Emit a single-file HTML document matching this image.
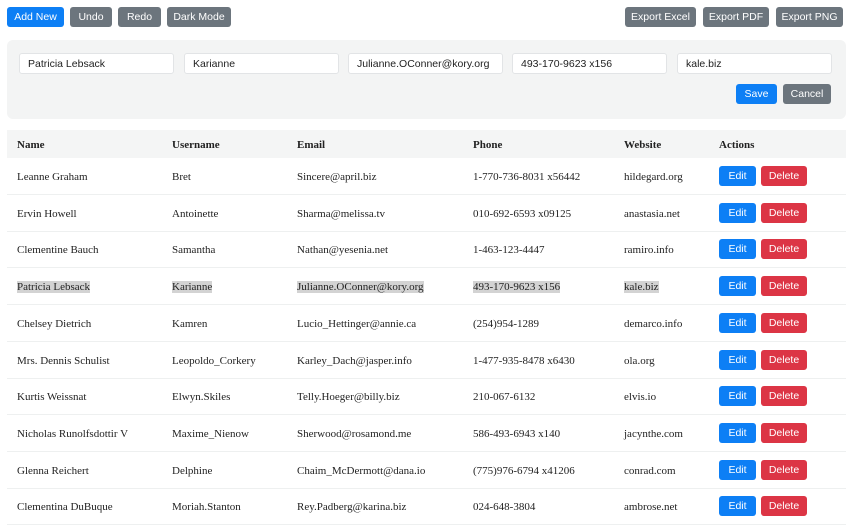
<!DOCTYPE html>
<html><head><meta charset="utf-8"><style>
*{box-sizing:border-box;margin:0;padding:0}
body{width:850px;height:522px;overflow:hidden;background:#fff;position:relative;font-family:"Liberation Serif",serif;font-size:11px;color:#222}
.b{position:absolute;height:20px;border-radius:3px;color:#fff;font-family:"Liberation Sans",sans-serif;font-size:10.5px;display:flex;align-items:center;justify-content:center}
.g{background:#6c757d}.p{background:#0d7ff5}.r{background:#dc3545}
.panel{position:absolute;left:7px;top:40px;width:839px;height:79px;background:#f3f4f4;border-radius:6px}
.in{position:absolute;top:53px;height:21px;width:155px;background:#fff;border:1px solid #e2e4e6;border-radius:3px;font-family:"Liberation Sans",sans-serif;font-size:10.5px;padding-left:8px;line-height:20px;color:#222}
.hd{position:absolute;left:7px;top:130px;width:839px;height:28px;background:#f4f5f5}
.t{position:absolute;white-space:nowrap}
.th{font-weight:bold}
.sep{position:absolute;left:7px;width:839px;height:1px;background:#eef0f0}
.hl{background:#d3d3d3}
</style></head><body>
<div class="b p" style="left:7px;top:7px;width:57px">Add New</div>
<div class="b g" style="left:70px;top:7px;width:42px">Undo</div>
<div class="b g" style="left:118px;top:7px;width:43px">Redo</div>
<div class="b g" style="left:167px;top:7px;width:64px">Dark Mode</div>
<div class="b g" style="left:625px;top:7px;width:71px">Export Excel</div>
<div class="b g" style="left:703px;top:7px;width:66px">Export PDF</div>
<div class="b g" style="left:776px;top:7px;width:67px">Export PNG</div>
<div class="panel"></div>
<div class="in" style="left:19px">Patricia Lebsack</div>
<div class="in" style="left:184px">Karianne</div>
<div class="in" style="left:348px">Julianne.OConner@kory.org</div>
<div class="in" style="left:512px">493-170-9623 x156</div>
<div class="in" style="left:677px">kale.biz</div>
<div class="b p" style="left:736px;top:84px;width:41px">Save</div>
<div class="b g" style="left:783px;top:84px;width:48px">Cancel</div>
<div class="hd"></div>
<div class="t th" style="left:17px;top:139px">Name</div>
<div class="t th" style="left:172px;top:139px">Username</div>
<div class="t th" style="left:297px;top:139px">Email</div>
<div class="t th" style="left:473px;top:139px">Phone</div>
<div class="t th" style="left:624px;top:139px">Website</div>
<div class="t th" style="left:719px;top:139px">Actions</div>
<div id="rows"></div>
<script>
var d=[["Leanne Graham","Bret","Sincere@april.biz","1-770-736-8031 x56442","hildegard.org"],
["Ervin Howell","Antoinette","Sharma@melissa.tv","010-692-6593 x09125","anastasia.net"],
["Clementine Bauch","Samantha","Nathan@yesenia.net","1-463-123-4447","ramiro.info"],
["Patricia Lebsack","Karianne","Julianne.OConner@kory.org","493-170-9623 x156","kale.biz"],
["Chelsey Dietrich","Kamren","Lucio_Hettinger@annie.ca","(254)954-1289","demarco.info"],
["Mrs. Dennis Schulist","Leopoldo_Corkery","Karley_Dach@jasper.info","1-477-935-8478 x6430","ola.org"],
["Kurtis Weissnat","Elwyn.Skiles","Telly.Hoeger@billy.biz","210-067-6132","elvis.io"],
["Nicholas Runolfsdottir V","Maxime_Nienow","Sherwood@rosamond.me","586-493-6943 x140","jacynthe.com"],
["Glenna Reichert","Delphine","Chaim_McDermott@dana.io","(775)976-6794 x41206","conrad.com"],
["Clementina DuBuque","Moriah.Stanton","Rey.Padberg@karina.biz","024-648-3804","ambrose.net"]];
var xs=[17,172,297,473,624],h="";
d.forEach(function(r,i){var c=176+i*36.7;
r.forEach(function(v,j){h+='<div class="t'+(i==3?' hl':'')+'" style="left:'+xs[j]+'px;top:'+(c-5)+'px">'+v+'</div>';});
h+='<div class="b p" style="left:719px;top:'+(c-10)+'px;width:37px">Edit</div>';
h+='<div class="b r" style="left:761px;top:'+(c-10)+'px;width:46px">Delete</div>';
h+='<div class="sep" style="top:'+(c+18)+'px"></div>';});
document.getElementById("rows").innerHTML=h;
</script>
</body></html>
